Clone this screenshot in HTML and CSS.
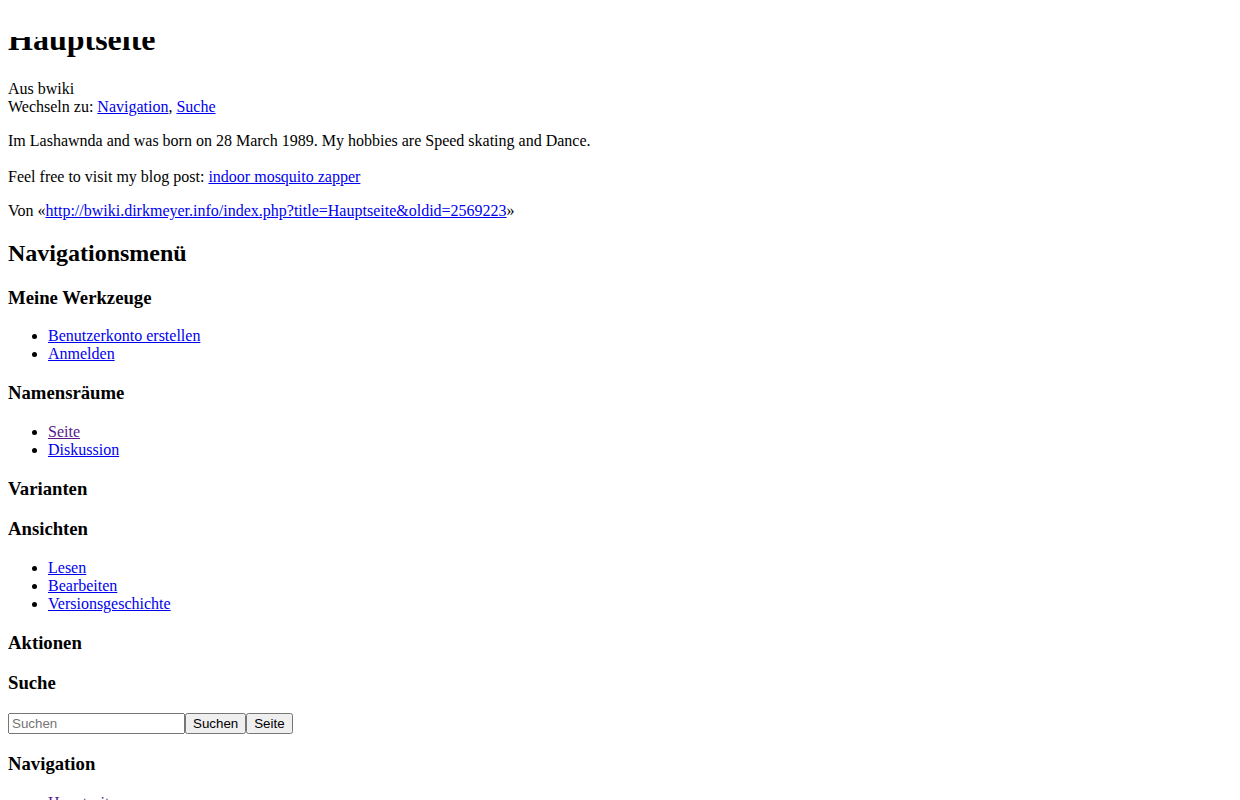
FILE: index.html
```html
<!DOCTYPE html>
<html lang="de">
<head>
<meta charset="utf-8">
<title>Hauptseite – bwiki</title>
<link rel="stylesheet" href="styles.css">
</head>
<body class="page">
<div class="top-mask"></div>
<div class="content">
<h1 class="first-heading">Hauptseite</h1>
<div class="body-content">
<div class="site-sub">Aus bwiki</div>
<div class="jump-to">Wechseln zu: <a class="lnk" href="#mw-navigation">Navigation</a>, <a class="lnk" href="#p-search">Suche</a></div>
<div class="parser-output">
<p class="para para-intro">Im Lashawnda and was born on 28 March 1989. My hobbies are Speed skating and Dance.</p>
<p class="para">Feel free to visit my blog post: <a class="lnk" href="#">indoor mosquito zapper</a></p>
</div>
<div class="print-footer">Von «<a class="lnk" href="#">http://bwiki.dirkmeyer.info/index.php?title=Hauptseite&amp;oldid=2569223</a>»</div>
</div>
</div>
<div class="mw-navigation" id="mw-navigation">
<h2 class="nav-title">Navigationsmenü</h2>
<div class="portlet">
<h3 class="portlet-title">Meine Werkzeuge</h3>
<ul class="portlet-list">
<li><a class="lnk" href="#">Benutzerkonto erstellen</a></li>
<li><a class="lnk" href="#">Anmelden</a></li>
</ul>
</div>
<div class="portlet">
<h3 class="portlet-title">Namensräume</h3>
<ul class="portlet-list">
<li><a class="lnk visited" href="#">Seite</a></li>
<li><a class="lnk" href="#">Diskussion</a></li>
</ul>
</div>
<div class="portlet">
<h3 class="portlet-title">Varianten</h3>
</div>
<div class="portlet">
<h3 class="portlet-title">Ansichten</h3>
<ul class="portlet-list">
<li><a class="lnk" href="#">Lesen</a></li>
<li><a class="lnk" href="#">Bearbeiten</a></li>
<li><a class="lnk" href="#">Versionsgeschichte</a></li>
</ul>
</div>
<div class="portlet">
<h3 class="portlet-title">Aktionen</h3>
</div>
<div class="portlet" id="p-search">
<h3 class="portlet-title">Suche</h3>
<form class="search-form" action="#">
<div class="search-row"><input class="search-input" type="search" placeholder="Suchen"><input class="search-btn" type="submit" value="Suchen"><input class="search-btn" type="submit" value="Seite"></div>
</form>
</div>
<div class="portlet">
<h3 class="portlet-title">Navigation</h3>
<ul class="portlet-list">
<li><a class="lnk visited" href="#">Hauptseite</a></li>
<li><a class="lnk" href="#">Letzte Änderungen</a></li>
</ul>
</div>
</div>
</body>
</html>
```

FILE: styles.css
```css
.page {
  margin: 0;
  padding: 0 8px 8px;
  font-family: "Liberation Serif", "Times New Roman", serif;
  font-size: 16px;
  color: #000;
  background: #fff;
}

.top-mask {
  position: absolute;
  top: 0;
  left: 0;
  right: 0;
  height: 37px;
  background: #fff;
  z-index: 2;
}

.first-heading {
  font-size: 32px;
  margin: 21.44px 0;
  font-weight: bold;
}

.para {
  margin: 16px 0;
}

.para-intro {
  margin-bottom: 18px;
}

.lnk {
  color: #0000ee;
  text-decoration: underline;
}

.lnk.visited {
  color: #551a8b;
}

.nav-title {
  font-size: 24px;
  margin: 19.92px 0;
}

.portlet-title {
  font-size: 18.72px;
  margin: 18.72px 0;
}

.portlet-list {
  margin: 16px 0;
  padding-left: 40px;
  list-style: disc;
}

.search-form {
  margin: 0;
}

.search-input,
.search-btn {
  font-family: "Liberation Sans", Arial, sans-serif;
  font-size: 13.333px;
  margin: 0;
}

.search-input {
  width: 177px;
  box-sizing: border-box;
}
```
